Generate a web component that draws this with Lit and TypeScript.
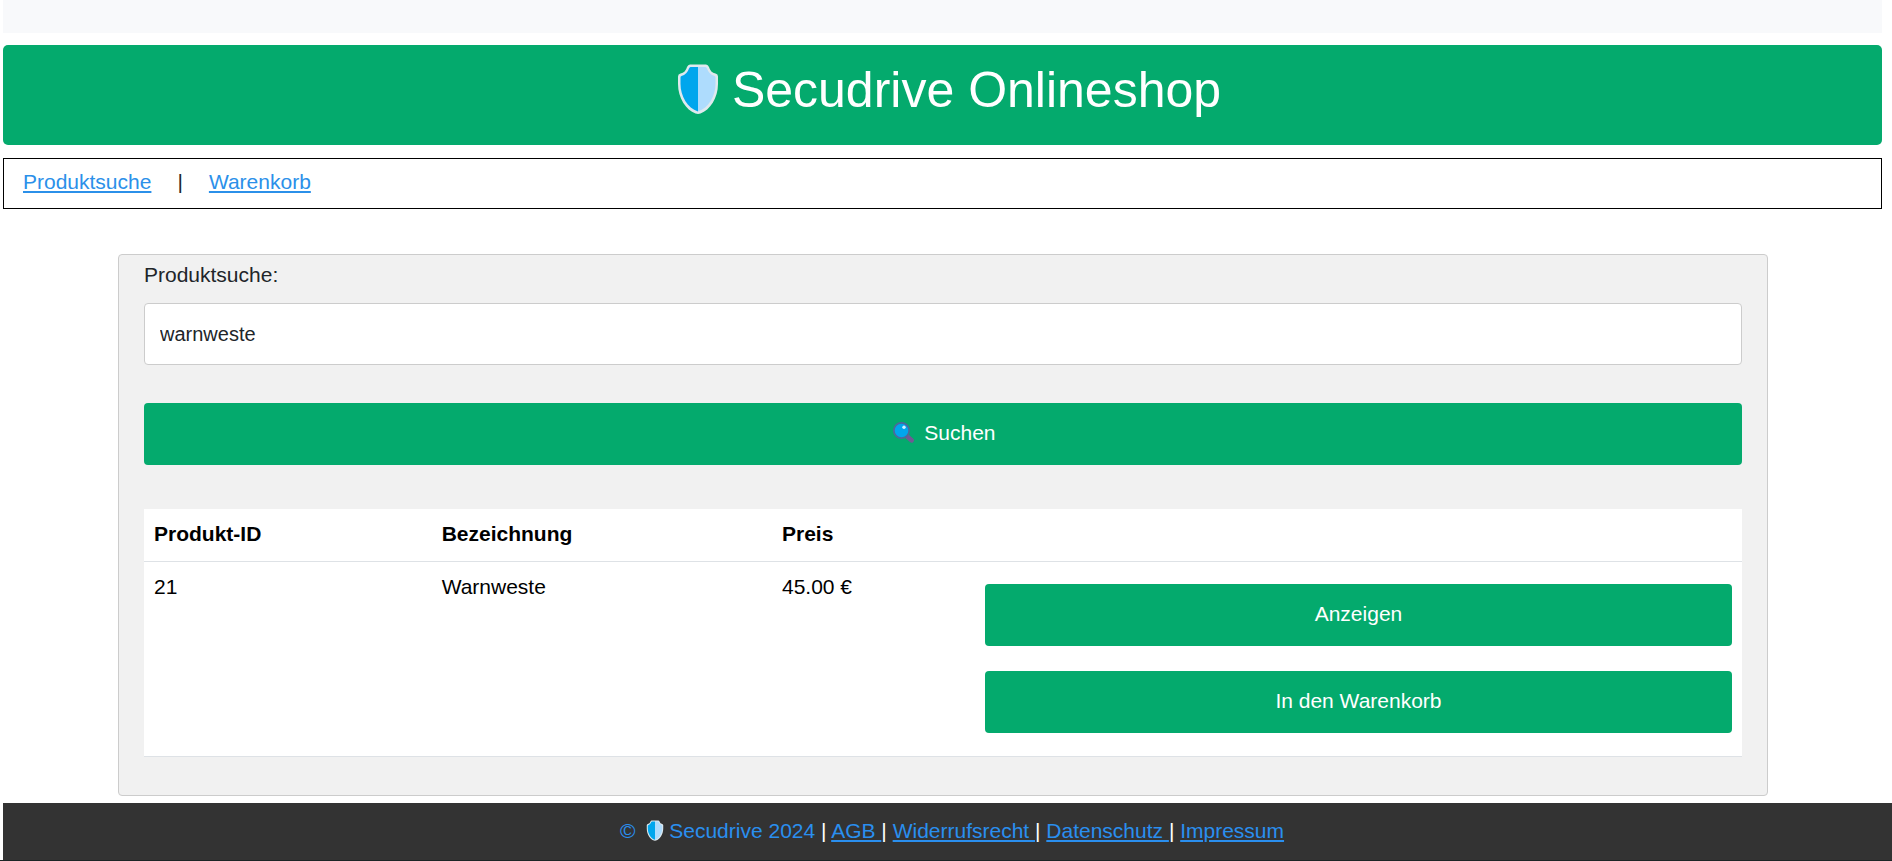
import { LitElement, html, css, svg } from "lit";
import { customElement, state } from "lit/decorators.js";

interface Product {
  id: number;
  name: string;
  price: string;
}

const shield = html`<svg class="glyph" viewBox="0 0 68 50" aria-hidden="true">
  ${svg`
    <path d="M26 0.500H42Q44 0.500 45 3Q46.500 8.500 51.500 9.500Q54 10 54 12.500V20C54 34 46 46 36.500 49.500Q34 50.300 31.500 49.500C22 46 14 34 14 20V12.500Q14 10 16.500 9.500Q21.500 8.500 23 3Q24 0.500 26 0.500Z" fill="#dfe9ee"/>
    <path d="M34 3H26.500Q25.500 3 25 4.500Q23 10.500 17.500 12Q16.500 12.300 16.500 13.500V20C16.500 32 23.500 44 34 47.500Z" fill="#00a6ed"/>
    <path d="M34 3H41.500Q42.500 3 43 4.500Q45 10.500 50.500 12Q51.500 12.300 51.500 13.500V20C51.500 32 44.500 44 34 47.500Z" fill="#aedcfd"/>
  `}
</svg>`;

const magnifier = html`<svg class="glyph" viewBox="0 0 28 21" aria-hidden="true">
  ${svg`
    <path d="M15.500 13L21.500 18.300" stroke="#6f5a94" stroke-width="4.800" stroke-linecap="round"/>
    <circle cx="11.500" cy="8.500" r="7.700" fill="#00a6ed" stroke="#4b6a9b" stroke-width="1.800"/>
    <circle cx="14" cy="5.300" r="1.700" fill="#d5f0ff"/>
  `}
</svg>`;

@customElement("app-root")
export class AppRoot extends LitElement {
  static styles = css`
    :host {
      display: block;
      background: #fff;
      color: #212529;
      font-family: Arial, "Liberation Sans", sans-serif;
      font-size: 21px;
      line-height: 32px;
    }
    *, *::before, *::after { box-sizing: border-box; }
    .page { padding: 0 10px 0 3px; }
    .strip { height: 33px; background: #f8f9fb; }
    .banner {
      margin-top: 12px;
      padding: 15px 16px 25px;
      border-radius: 5px;
      background: #04aa6d;
      color: #fff;
      text-align: center;
    }
    .title { margin: 0; font-size: 50px; line-height: 60px; font-weight: 400; }
    .glyph { width: 28px; height: 21px; vertical-align: -3px; }
    .title .glyph { width: 68px; height: 50px; vertical-align: -7px; }
    a { color: #2b90e9; text-decoration: underline; text-decoration-thickness: 2px; text-underline-offset: 2px; }
    .nav {
      display: flex;
      gap: 26px;
      margin-top: 13px;
      padding: 7px 19px 10px;
      border: 1px solid #000;
    }
    .panel {
      margin: 45px 114px 0 115px;
      padding: 4px 25px 38px;
      border: 1px solid #ccc;
      border-radius: 4px;
      background: #f1f1f1;
    }
    .label { display: block; margin-bottom: 12px; }
    .field {
      display: block;
      width: 100%;
      height: 62px;
      padding: 0 15px;
      border: 1px solid #ccc;
      border-radius: 4px;
      background: #fff;
      color: #212529;
      font: inherit;
      font-size: 20px;
    }
    .button {
      display: block;
      width: 100%;
      padding: 14px 15px 16px;
      border: 0;
      border-radius: 4px;
      background: #04aa6d;
      color: #fff;
      font: inherit;
      cursor: pointer;
    }
    .search { margin-top: 38px; }
    .results {
      width: 100%;
      margin-top: 44px;
      border-spacing: 0;
      table-layout: fixed;
      background: #fff;
      color: #000;
    }
    .results th, .results td {
      padding: 9px 10px 11px;
      border-bottom: 1px solid #dee2e6;
      text-align: left;
      vertical-align: top;
    }
    .col-id { width: 18%; }
    .col-name { width: 21.3%; }
    .col-price { width: 12.7%; }
    .actions { display: flex; flex-direction: column; gap: 25px; padding: 13px 0 12px; }
    .footer {
      margin: 7px 0 0 3px;
      padding: 12px 0 13px 9px;
      background: #333;
      color: #fff;
      text-align: center;
      white-space: pre;
    }
    .owner, .footer a { color: #2a8fef; }
    .edge { height: 2px; background: #1b2626; }
  `;

  @state() private query = "warnweste";

  private products: Product[] = [{ id: 21, name: "Warnweste", price: "45.00 €" }];

  private onInput(e: Event) {
    this.query = (e.target as HTMLInputElement).value;
  }

  render() {
    return html`
      <div class="page">
        <div class="strip"></div>
        <header class="banner"><h1 class="title">${shield}Secudrive Onlineshop</h1></header>
        <nav class="nav">
          <a href="#suche">Produktsuche</a><span>|</span><a href="#warenkorb">Warenkorb</a>
        </nav>
        <main class="panel">
          <form @submit=${(e: Event) => e.preventDefault()}>
            <label class="label" for="query">Produktsuche:</label>
            <input class="field" id="query" type="text" .value=${this.query} @input=${this.onInput} />
            <button class="button search" type="submit">${magnifier} Suchen</button>
          </form>
          <table class="results">
            <thead>
              <tr>
                <th class="col-id" scope="col">Produkt-ID</th>
                <th class="col-name" scope="col">Bezeichnung</th>
                <th class="col-price" scope="col">Preis</th>
                <td></td>
              </tr>
            </thead>
            <tbody>
              ${this.products.map(
                (p) => html`<tr>
                  <td>${p.id}</td>
                  <td>${p.name}</td>
                  <td>${p.price}</td>
                  <td>
                    <div class="actions">
                      <button class="button" type="button">Anzeigen</button>
                      <button class="button" type="button">In den Warenkorb</button>
                    </div>
                  </td>
                </tr>`
              )}
            </tbody>
          </table>
        </main>
      </div>
      <footer class="footer"><span class="owner">© ${shield}Secudrive 2024</span> | <a href="#agb">AGB </a>| <a href="#widerruf">Widerrufsrecht </a>| <a href="#datenschutz">Datenschutz </a>| <a href="#impressum">Impressum</a></footer>
      <div class="edge"></div>
    `;
  }
}
